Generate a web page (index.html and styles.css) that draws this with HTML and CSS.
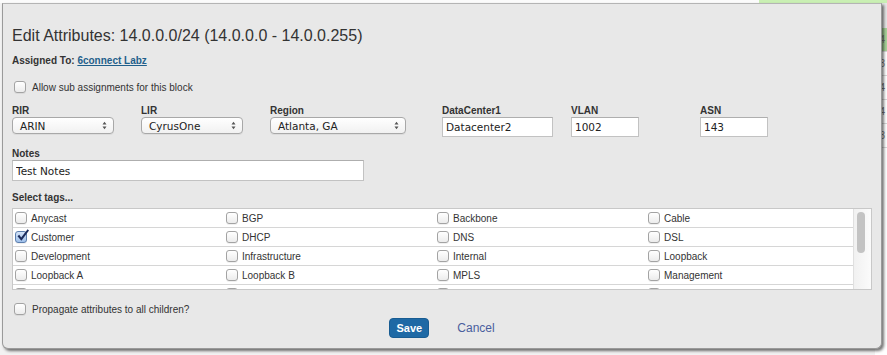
FILE: index.html
```html
<!DOCTYPE html>
<html>
<head>
<meta charset="utf-8">
<title>Edit Attributes</title>
<link rel="stylesheet" href="styles.css">
</head>
<body>
<div class="page">
  <div class="page-top">
    <div class="page-top-fill"></div>
    <div class="page-top-green"></div>
  </div>
  <div class="page-body">
    <div class="page-main"></div>
    <div class="page-list">
      <div class="pl-head"></div>
      <div class="pl-row pl-green">4</div>
      <div class="pl-row">3</div>
      <div class="pl-row">4</div>
      <div class="pl-row">4</div>
      <div class="pl-row">3</div>
      <div class="pl-rest"></div>
    </div>
  </div>
</div>

<div class="modal">
  <h1 class="title">Edit Attributes: 14.0.0.0/24 (14.0.0.0 - 14.0.0.255)</h1>
  <div class="assigned">Assigned To: <a href="#">6connect Labz</a></div>

  <div class="check-row">
    <span class="cb"></span>
    <span>Allow sub assignments for this block</span>
  </div>

  <div class="fields">
    <div class="field f-rir">
      <label>RIR</label>
      <div class="select s-small"><span>ARIN</span><svg class="arrows" width="5" height="9" viewBox="0 0 5 9"><path d="M0.5 3.5 L2.5 0.8 L4.5 3.5 Z M0.5 5.5 L2.5 8.2 L4.5 5.5 Z" fill="#555"/></svg></div>
    </div>
    <div class="field f-lir">
      <label>LIR</label>
      <div class="select s-small"><span>CyrusOne</span><svg class="arrows" width="5" height="9" viewBox="0 0 5 9"><path d="M0.5 3.5 L2.5 0.8 L4.5 3.5 Z M0.5 5.5 L2.5 8.2 L4.5 5.5 Z" fill="#555"/></svg></div>
    </div>
    <div class="field f-region">
      <label>Region</label>
      <div class="select s-region"><span>Atlanta, GA</span><svg class="arrows" width="5" height="9" viewBox="0 0 5 9"><path d="M0.5 3.5 L2.5 0.8 L4.5 3.5 Z M0.5 5.5 L2.5 8.2 L4.5 5.5 Z" fill="#555"/></svg></div>
    </div>
    <div class="field f-dc">
      <label>DataCenter1</label>
      <input class="input i-dc" type="text" value="Datacenter2">
    </div>
    <div class="field f-vlan">
      <label>VLAN</label>
      <input class="input i-vlan" type="text" value="1002">
    </div>
    <div class="field f-asn">
      <label>ASN</label>
      <input class="input i-asn" type="text" value="143">
    </div>
  </div>

  <div class="field notes">
    <label>Notes</label>
    <input class="input i-notes" type="text" value="Test Notes">
  </div>

  <div class="tags-label">Select tags...</div>
  <div class="tags">
    <div class="tag-list">
      <div class="tag-row">
        <div class="tag"><span class="cb"></span>Anycast</div>
        <div class="tag"><span class="cb"></span>BGP</div>
        <div class="tag"><span class="cb"></span>Backbone</div>
        <div class="tag"><span class="cb"></span>Cable</div>
      </div>
      <div class="tag-row">
        <div class="tag"><span class="cb cb-checked"><svg class="check" width="14" height="15" viewBox="0 0 14 15"><path d="M1.5 8.2 L3.2 6.8 L5.2 9.6 L11.6 1.2 L13 2.4 L5.4 12.8 Z" fill="#1c2c5c"/></svg></span>Customer</div>
        <div class="tag"><span class="cb"></span>DHCP</div>
        <div class="tag"><span class="cb"></span>DNS</div>
        <div class="tag"><span class="cb"></span>DSL</div>
      </div>
      <div class="tag-row">
        <div class="tag"><span class="cb"></span>Development</div>
        <div class="tag"><span class="cb"></span>Infrastructure</div>
        <div class="tag"><span class="cb"></span>Internal</div>
        <div class="tag"><span class="cb"></span>Loopback</div>
      </div>
      <div class="tag-row">
        <div class="tag"><span class="cb"></span>Loopback A</div>
        <div class="tag"><span class="cb"></span>Loopback B</div>
        <div class="tag"><span class="cb"></span>MPLS</div>
        <div class="tag"><span class="cb"></span>Management</div>
      </div>
      <div class="tag-row">
        <div class="tag"><span class="cb"></span></div>
        <div class="tag"><span class="cb"></span></div>
        <div class="tag"><span class="cb"></span></div>
        <div class="tag"><span class="cb"></span></div>
      </div>
    </div>
    <div class="scrollbar"><div class="thumb"></div></div>
  </div>

  <div class="check-row propagate">
    <span class="cb"></span>
    <span>Propagate attributes to all children?</span>
  </div>

  <div class="actions">
    <button class="btn-save" type="button">Save</button>
    <a class="btn-cancel" href="#">Cancel</a>
  </div>
</div>
</body>
</html>
```

FILE: styles.css
```css
html, body {
  margin: 0;
  padding: 0;
}

body {
  width: 887px;
  height: 355px;
  overflow: hidden;
  position: relative;
  background: #f4f4f4;
  font-family: "Liberation Sans", Arial, sans-serif;
  color: #333;
}

/* background page (mostly hidden behind the modal) */
.page {
  display: flex;
  flex-direction: column;
  height: 355px;
}

.page-top {
  display: flex;
  height: 3px;
}

.page-top-fill {
  flex: 1;
  background: #fbfbfb;
}

.page-top-green {
  width: 128px;
  background: #c9efb3;
}

.page-body {
  flex: 1;
  display: flex;
}

.page-main {
  flex: 1;
  background: #f2f2f2;
}

.page-list {
  width: 12px;
  display: flex;
  flex-direction: column;
  background: #fff;
  font-size: 10px;
  color: #777;
}

.pl-head {
  height: 25px;
  background: #e6e6e6;
}

.pl-row {
  height: 24px;
  box-sizing: border-box;
  border-bottom: 1px solid #d9d9d9;
  line-height: 24px;
  text-align: right;
  padding-right: 2px;
}

.pl-green {
  background: #a9d39a;
}

.pl-rest {
  flex: 1;
  background: #fff;
}

/* modal */
.modal {
  position: absolute;
  left: 2px;
  top: 3px;
  width: 880px;
  height: 346px;
  box-sizing: border-box;
  border: 1px solid #9a9a9a;
  border-top-color: #b4b4b4;
  border-radius: 0 0 6px 6px;
  background: #e8e8e8;
  box-shadow: 2px 2px 3px rgba(0, 0, 0, 0.55);
  padding: 22px 9px 0 9px;
}

.title {
  margin: 0;
  font-size: 16px;
  line-height: 20px;
  font-weight: normal;
  color: #333;
}

.assigned {
  margin-top: 8px;
  font-size: 10px;
  line-height: 14px;
  font-weight: bold;
  color: #333;
}

.assigned a {
  color: #1f5f8b;
  text-decoration: underline;
}

.check-row {
  display: flex;
  align-items: center;
  gap: 6px;
  height: 12px;
  margin-top: 13px;
  padding-left: 2px;
  font-size: 10px;
  color: #333;
}

.cb {
  position: relative;
  display: inline-block;
  flex: none;
  width: 12px;
  height: 12px;
  box-sizing: border-box;
  border: 1px solid #a3a3a3;
  border-radius: 3px;
  background: linear-gradient(#ffffff, #ececec);
  box-shadow: 0 1px 0 rgba(0, 0, 0, 0.06);
}

.cb-checked {
  background: linear-gradient(#d4e3f8, #9fc0ea);
  border-color: #5d7fae;
}

.check {
  position: absolute;
  left: 0px;
  top: -4px;
}

.fields {
  display: flex;
  margin-top: 12px;
}

.field {
  display: flex;
  flex-direction: column;
}

.field label {
  font-size: 10px;
  line-height: 12px;
  font-weight: bold;
  color: #333;
}

.f-rir,
.f-lir,
.f-dc,
.f-vlan {
  width: 129px;
}

.f-region {
  width: 172px;
}

.select {
  height: 17px;
  box-sizing: border-box;
  border: 1px solid #a8a8a8;
  border-radius: 4px;
  background: linear-gradient(#ffffff, #f1f1f1);
  display: flex;
  align-items: center;
  justify-content: space-between;
  padding: 0 6px 0 7px;
  font-family: "DejaVu Sans", sans-serif;
  font-size: 10.5px;
  color: #222;
  box-shadow: 0 1px 0 rgba(0, 0, 0, 0.05);
}

.s-small {
  width: 102px;
}

.s-region {
  width: 136px;
}

.input {
  height: 20px;
  box-sizing: border-box;
  border: 1px solid #c2c2c2;
  border-top-color: #aeaeae;
  background: #fff;
  padding: 0 3px;
  margin: 0;
  font-family: "DejaVu Sans", sans-serif;
  font-size: 10.5px;
  color: #222;
  outline: none;
}

.i-dc {
  width: 111px;
}

.i-vlan {
  width: 68px;
}

.i-asn {
  width: 68px;
}

.notes {
  margin-top: 11px;
}

.i-notes {
  width: 352px;
  height: 21px;
}

.tags-label {
  margin-top: 11px;
  font-size: 10px;
  line-height: 12px;
  font-weight: bold;
}

.tags {
  margin-top: 4px;
  display: flex;
  height: 82px;
  box-sizing: border-box;
  border: 1px solid #c8c8c8;
  background: #fff;
}

.tag-list {
  flex: 1;
  overflow: hidden;
}

.tag-row {
  display: grid;
  grid-template-columns: repeat(4, 211px);
  height: 19px;
  box-sizing: border-box;
  border-bottom: 1px solid #d6d6d6;
  padding-left: 2px;
  align-items: center;
}

.tag {
  display: flex;
  align-items: center;
  gap: 4px;
  font-size: 10px;
  color: #333;
}

.scrollbar {
  width: 14px;
  flex: none;
  border-left: 1px solid #e0e0e0;
  background: linear-gradient(to right, #f1f1f1, #fbfbfb);
  padding: 3px 0 0 3px;
  box-sizing: content-box;
}

.thumb {
  width: 8px;
  height: 41px;
  border-radius: 4px;
  background: #c3c3c3;
}

.propagate {
  margin-top: 13px;
}

.actions {
  display: flex;
  justify-content: center;
  align-items: center;
  gap: 28px;
  margin-top: 3px;
}

.btn-save {
  width: 40px;
  height: 20px;
  padding: 0;
  border: 1px solid #185c92;
  border-radius: 4px;
  background: #1e69a5;
  color: #fff;
  font-family: "Liberation Sans", Arial, sans-serif;
  font-size: 11px;
  font-weight: bold;
}

.btn-cancel {
  color: #4a5e9e;
  font-size: 12px;
  text-decoration: none;
}
```
